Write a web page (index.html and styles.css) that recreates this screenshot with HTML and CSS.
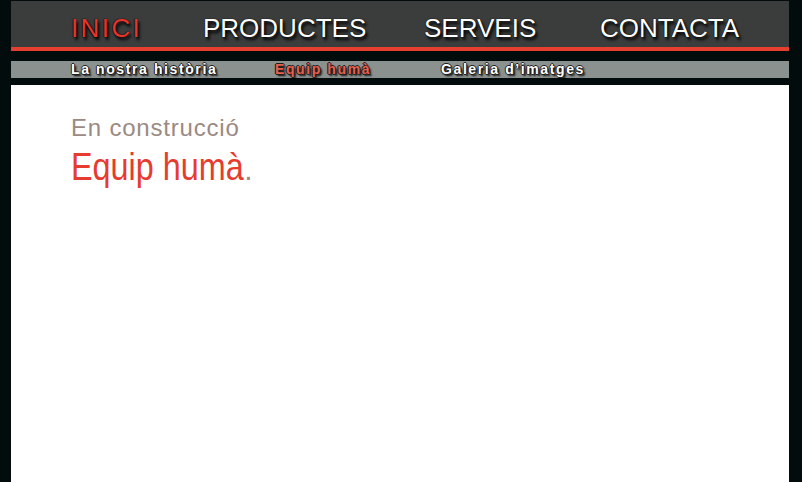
FILE: index.html
```html
<!DOCTYPE html>
<html lang="ca">
<head>
  <meta charset="UTF-8">
  <meta name="viewport" content="width=device-width, initial-scale=1.0">
  <title>Equip humà</title>
  <link rel="stylesheet" href="styles.css">
</head>
<body>
  <div class="wrap">
    <nav class="topbar">
      <a href="#" class="actiu">INICI</a>
      <a href="#">PRODUCTES</a>
      <a href="#">SERVEIS</a>
      <a href="#">CONTACTA</a>
    </nav>

    <nav class="subbar">
      <a href="#">La nostra història</a>
      <a href="#" class="actiu">Equip humà</a>
      <a href="#">Galeria d’imatges</a>
    </nav>

    <main class="contingut">
      <h2>En construcció</h2>
      <h1><span class="titol">Equip humà</span><span class="punt">.</span></h1>
    </main>
  </div>
</body>
</html>
```

FILE: styles.css
```css
html, body {
  height: 100%;
}
body {
  margin: 0;
  padding: 1px 13px 0 11px;
  box-sizing: border-box;
  background: #020c0c;
  font-family: 'Liberation Sans', Arial, sans-serif;
}
.wrap {
  display: flex;
  flex-direction: column;
  height: 100%;
}
a {
  text-decoration: none;
}
.topbar {
  display: grid;
  grid-template-columns: 132px 221px 176px auto;
  height: 50px;
  box-sizing: border-box;
  padding: 8px 0 0 60px;
  background: #3b3c3c;
  border-bottom: 4px solid #e5402f;
  line-height: 38px;
}
.topbar a {
  color: #fff;
  font-size: 26px;
  text-shadow: 0 0 1px #000, 0 0 1px #000, 2px 3px 3px #000;
}
.topbar a.actiu {
  color: #e8352c;
  letter-spacing: 2.4px;
}
.subbar {
  display: grid;
  grid-template-columns: 204px 166px auto;
  margin-top: 10px;
  height: 17px;
  padding-left: 60px;
  background: #8a918f;
  line-height: 17px;
}
.subbar a {
  color: #fff;
  font-size: 14px;
  font-weight: bold;
  letter-spacing: 1.6px;
  text-shadow: -1px 0 #1e1e1e, 1px 0 #1e1e1e, 0 -1px #1e1e1e, 0 1px #1e1e1e, 2px 2px 2px #000;
}
.subbar a.actiu {
  color: #e8604f;
}
.contingut {
  flex: 1;
  margin-top: 7px;
  padding: 29px 0 0 60px;
  background: #fff;
}
.contingut h2 {
  margin: 0;
  font-size: 24px;
  font-weight: normal;
  line-height: 28px;
  letter-spacing: 0.8px;
  color: #9b8a83;
}
.contingut h1 {
  margin: 3px 0 0;
  font-size: 39px;
  font-weight: normal;
  line-height: 44px;
  white-space: nowrap;
}
.titol {
  display: inline-block;
  color: #e63b2e;
  transform: scaleX(0.83);
  transform-origin: left;
  margin-right: -35px;
}
.punt {
  font-size: 30px;
  color: #9b8a83;
}
```
